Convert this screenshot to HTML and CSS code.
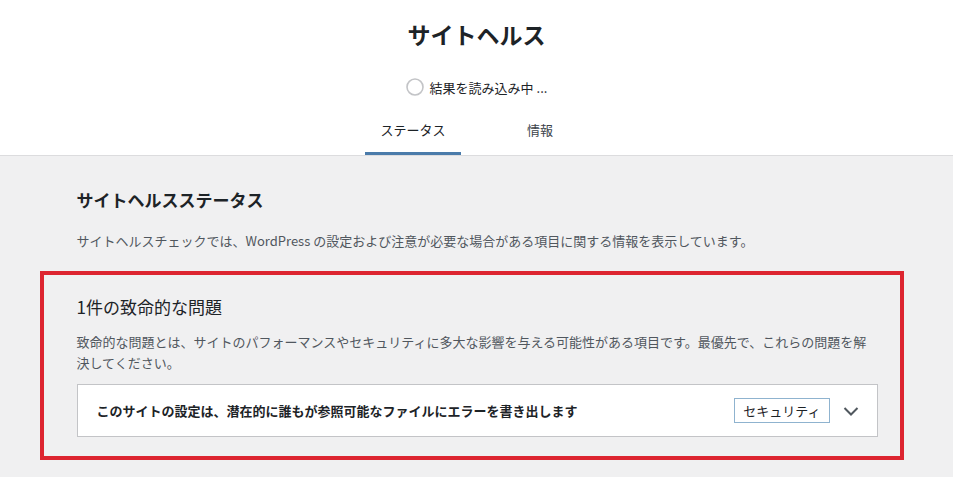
FILE: index.html
```html
<html>

<head>
<meta charset="utf-8">
<title>サイトヘルス</title>
<link rel="stylesheet" href="styles.css">
</head>

<body>
	<div class="health-header">
		<h1 class="title">サイトヘルス</h1>
		<div class="progress">
			<svg class="progress-ring" width="18" height="18" viewBox="0 0 18 18">
				<circle cx="9" cy="9" r="8" fill="none" stroke="#c3c4c7" stroke-width="1.6"></circle>
			</svg>
			<span>結果を読み込み中 ...</span>
		</div>
		<div class="tabs">
			<a class="tab active" href="#">ステータス</a>
			<a class="tab" href="#">情報</a>
		</div>
	</div>
	<div class="health-body">
		<h2 class="section-title">サイトヘルスステータス</h2>
		<p class="intro">サイトヘルスチェックでは、WordPress の設定および注意が必要な場合がある項目に関する情報を表示しています。</p>
		<div class="critical">
			<h3 class="count">1件の致命的な問題</h3>
			<p class="desc">致命的な問題とは、サイトのパフォーマンスやセキュリティに多大な影響を与える可能性がある項目です。最優先で、これらの問題を解決してください。</p>
			<div class="issue">
				<span class="issue-title">このサイトの設定は、潜在的に誰もが参照可能なファイルにエラーを書き出します</span>
				<span class="badge">セキュリティ</span>
				<svg class="chevron" width="20" height="20" viewBox="0 0 20 20">
					<path d="M3.5 7 L10 13.5 L16.5 7" fill="none" stroke="#50575e" stroke-width="2"></path>
				</svg>
			</div>
		</div>
	</div>
</body>

</html>
```

FILE: styles.css
```css
body {
	margin: 0;
	background-color: #f0f0f1;
	font-family: "Noto Sans CJK JP", "Noto Sans", sans-serif;
	color: #1d2327;
}

.health-header {
	background-color: #fff;
	border-bottom: 1px solid #dcdcde;
	text-align: center;
}

.title {
	margin: 0;
	padding-top: 19px;
	font-size: 23px;
	font-weight: bold;
	line-height: 30px;
}

.progress {
	display: flex;
	justify-content: center;
	align-items: center;
	gap: 6px;
	margin-top: 28px;
	height: 20px;
	font-size: 13px;
	color: #1d2327;
}

.progress-ring {
	display: block;
}

.tabs {
	display: inline-grid;
	grid-template-columns: 1fr 1fr;
	margin-top: 16px;
}

.tab {
	display: block;
	margin: 0 16px;
	padding: 8px 15px 16px;
	font-size: 13px;
	line-height: 18px;
	color: #3c434a;
	text-decoration: none;
}

.tab.active {
	color: #1d2327;
	box-shadow: inset 0 -3px #4a7baa;
}

.health-body {
	width: 800px;
	margin: 0 auto;
	padding-top: 32px;
}

.section-title {
	margin: 0;
	font-size: 17px;
	font-weight: bold;
	line-height: 24px;
}

.intro {
	margin: 18px 0 0;
	font-size: 13px;
	line-height: 21px;
	color: #50575e;
}

.critical {
	margin: 20px -27px 0 -37px;
	padding: 20px 22px 19px 33px;
	border: 4px solid #dd2530;
}

.count {
	margin: 0;
	font-size: 17px;
	font-weight: normal;
	line-height: 24px;
}

.desc {
	margin: 12px 0 0;
	font-size: 13px;
	line-height: 21px;
	color: #50575e;
}

.issue {
	display: flex;
	align-items: center;
	margin-top: 11px;
	height: 51px;
	padding: 0 16px 0 19px;
	background-color: #fff;
	border: 1px solid #c3c4c7;
}

.issue-title {
	flex: 1;
	font-size: 13px;
	font-weight: bold;
	line-height: 18px;
}

.badge {
	margin-right: 11px;
	padding: 0 8px;
	font-size: 13px;
	line-height: 23px;
	border: 1px solid #8fb3cf;
	color: #1d2327;
}

.chevron {
	display: block;
}
```
